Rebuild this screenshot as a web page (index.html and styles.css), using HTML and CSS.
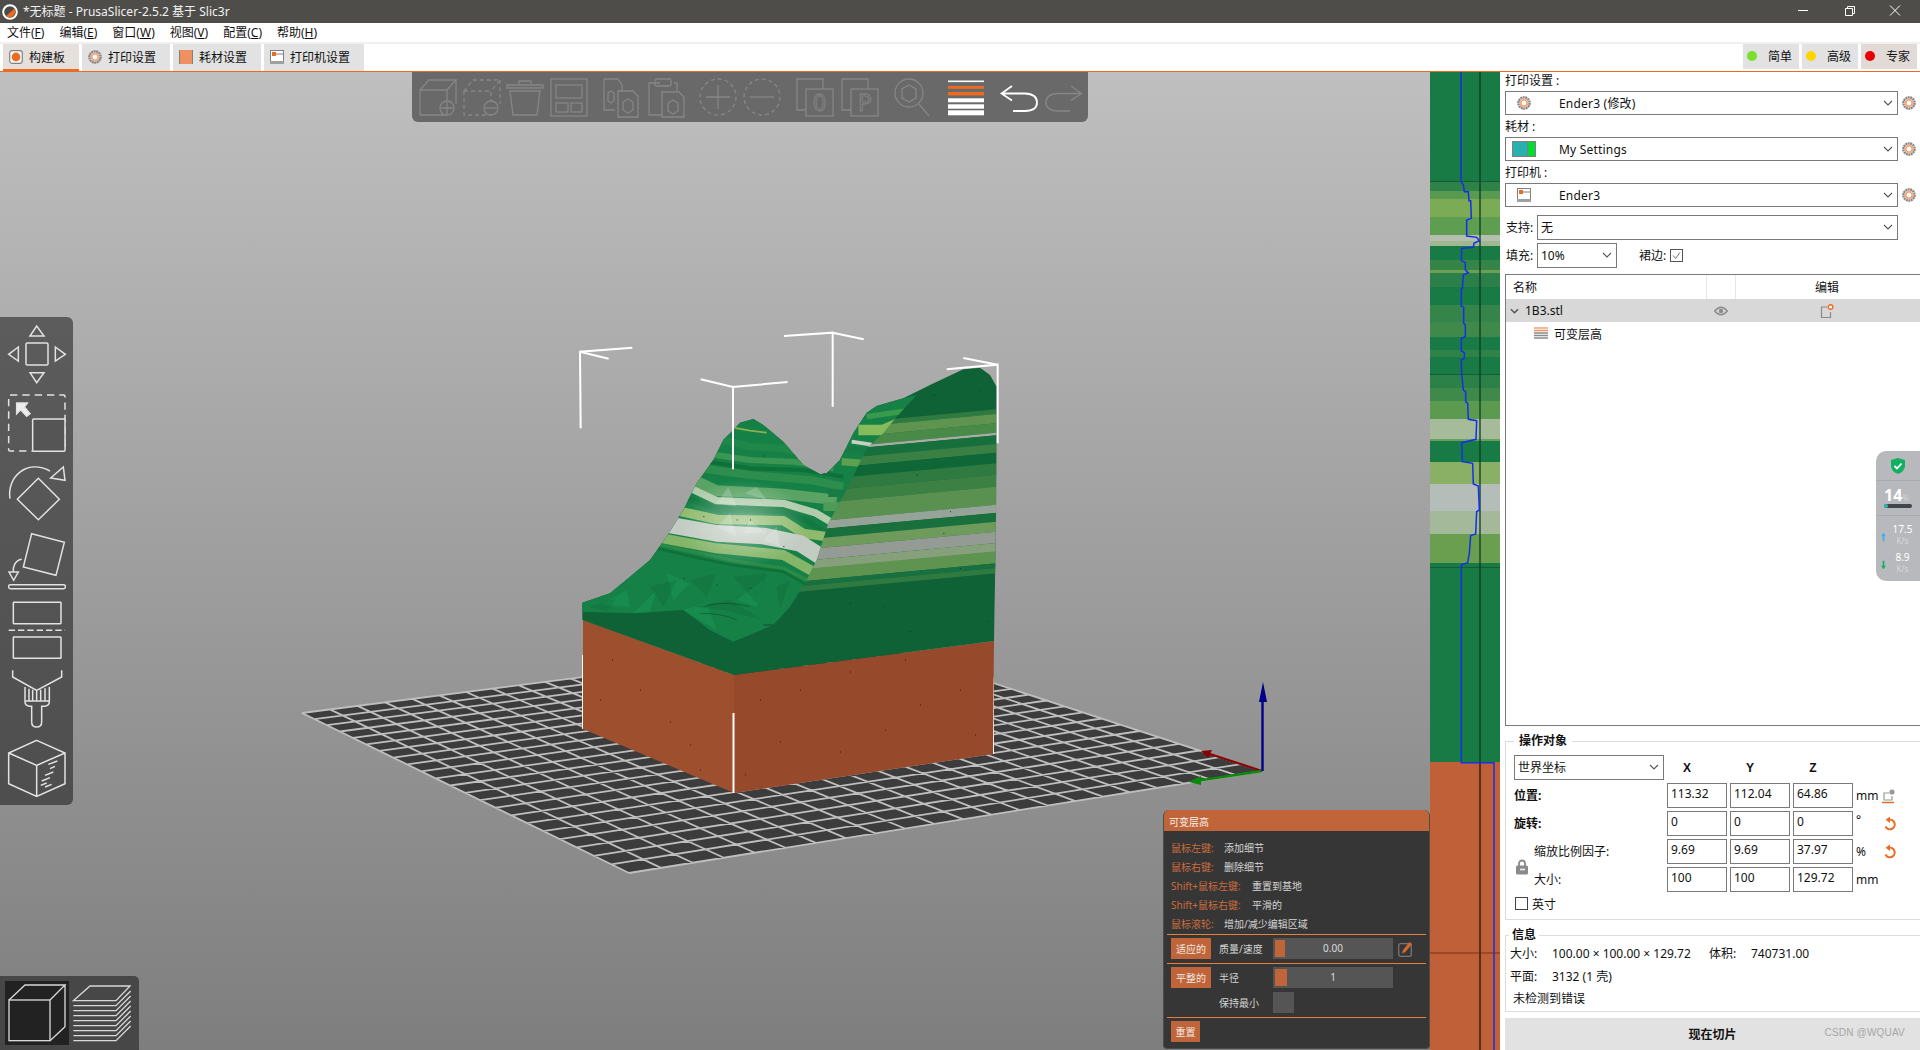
FILE: index.html
```html
<!DOCTYPE html>
<html lang="zh">
<head>
<meta charset="utf-8">
<title>PrusaSlicer</title>
<link rel="stylesheet" href="styles.css">
<script src="scene.js" defer></script>
</head>
<body>
<svg class="defs" width="0" height="0" aria-hidden="true">
  <defs>
    <symbol id="gear" viewBox="0 0 14 14">
      <circle cx="7" cy="7" r="5.6" fill="none" stroke="#858585" stroke-width="2.4" stroke-dasharray="1.9 .55"/>
      <circle cx="7" cy="7" r="4" fill="#fff" stroke="#f0a070" stroke-width="1.1"/>
      <circle cx="7" cy="7" r="3" fill="#fff" stroke="#ed6b21" stroke-width=".7"/>
    </symbol>
    <symbol id="chev" viewBox="0 0 10 6">
      <path d="M1 1l4 4 4-4" fill="none" stroke="#555" stroke-width="1.1"/>
    </symbol>
    <symbol id="printer" viewBox="0 0 14 14">
      <rect x=".5" y=".5" width="13" height="13" fill="#fff" stroke="#808080"/>
      <rect x="0" y="11" width="14" height="3" fill="#a0a0a0"/>
      <rect x="2" y="2" width="4" height="4" fill="#ed6b21"/>
      <path d="M6 4h8" stroke="#808080"/>
    </symbol>
    <symbol id="reset" viewBox="0 0 14 16">
      <path d="M3.5 10.5a4.8 4.8 0 1 0 3-6.6" fill="none" stroke="#ed6b21" stroke-width="2"/>
      <path d="M8 .6v6.4L3.6 3.8z" fill="#ed6b21"/>
    </symbol>
  </defs>
</svg>

<div class="app">
  <header class="titlebar">
    <svg class="app-logo" viewBox="0 0 16 16">
      <circle cx="8" cy="8" r="7.8" fill="#fff"/>
      <circle cx="8" cy="8" r="5.8" fill="#4a4a4a"/>
      <path d="M12.6 4.6A5.8 5.8 0 0 1 4 12z" fill="#ed6b21"/>
    </svg>
    <span class="title-text">*无标题 - PrusaSlicer-2.5.2 基于 Slic3r</span>
    <div class="winctl">
      <svg viewBox="0 0 46 23"><path d="M18 10.5h10" stroke="#fff"/></svg>
      <svg viewBox="0 0 46 23"><path d="M19.5 8.5h7v7h-7zM21.5 8.5v-2h7v7h-2" fill="none" stroke="#fff"/></svg>
      <svg viewBox="0 0 46 23"><path d="M18 5.5l10 10M28 5.5l-10 10" stroke="#fff"/></svg>
    </div>
  </header>

  <nav class="menubar">
    <span>文件(<u>F</u>)</span><span>编辑(<u>E</u>)</span><span>窗口(<u>W</u>)</span><span>视图(<u>V</u>)</span><span>配置(<u>C</u>)</span><span>帮助(<u>H</u>)</span>
  </nav>

  <div class="tabbar">
    <div class="tab tab-active tab-w76">
      <svg class="tab-icon" viewBox="0 0 14 14"><rect x=".7" y=".7" width="12.6" height="12.6" rx="2.5" fill="#fff" stroke="#808080" stroke-width="1.2"/><circle cx="7" cy="7" r="4.4" fill="#ed6b21"/></svg>
      <span>构建板</span>
    </div>
    <div class="tab tab-w88">
      <svg class="tab-icon"><use href="#gear"/></svg>
      <span>打印设置</span>
    </div>
    <div class="tab tab-w88">
      <svg class="tab-icon" viewBox="0 0 14 14"><rect x="0" y="0" width="14" height="14" fill="#f09060"/><path d="M.5 0v14M13.5 0v14" stroke="#808080"/></svg>
      <span>耗材设置</span>
    </div>
    <div class="tab tab-w100">
      <svg class="tab-icon"><use href="#printer"/></svg>
      <span>打印机设置</span>
    </div>
    <div class="tab-spacer"></div>
    <div class="mode"><i class="dot dot-green"></i><span>简单</span></div>
    <div class="mode"><i class="dot dot-yellow"></i><span>高级</span></div>
    <div class="mode mode-active"><i class="dot dot-red"></i><span>专家</span></div>
  </div>

  <main class="workspace">
    <section class="canvas">
      <svg class="scene" viewBox="0 72 1430 978" width="1430" height="978">
        <defs>
          <clipPath id="sil"><path d="M97 848L180 820 240 770 300 720 350 650 400 570 440 490 490 420 520 360 550 330 570 308 610 297 640 315 700 365 760 435 810 463 830 460 870 420 910 340 950 278 980 258 1060 235 1140 195 1240 148 1290 143 1320 165 1340 200 1338 600 1332 963 552 1065 97 900Z"/></clipPath>
          <clipPath id="terr"><path d="M97 848L180 820 240 770 300 720 350 650 400 570 440 490 490 420 520 360 550 330 570 308 610 297 640 315 700 365 760 435 810 463 830 460 870 420 910 340 950 278 980 258 1060 235 1100 225 1040 290 1000 340 950 385 900 490 835 610 800 720 765 790 720 860 670 915 550 965 480 930 400 870 250 880 97 875Z"/></clipPath>
          <radialGradient id="glow"><stop offset="0" stop-color="#fff" stop-opacity=".45"/><stop offset="1" stop-color="#fff" stop-opacity="0"/></radialGradient>
        </defs>

        <g id="bed"></g>

        <g class="bbox">
          <path d="M583 655V729M993 677V754"/>
        </g>

        <path d="M583 620L734 675V793L583 729Z" fill="#9e4f2e"/>
        <path d="M734 675L994 641 993 754 734 793Z" fill="#974a2b"/>
        <g class="specks">
          <path d="M612 660h1M640 690h1M600 700h1M670 722h1M690 745h1M650 760h1M760 700h1M800 690h1M850 672h1M905 660h1M960 690h1M885 730h1M780 742h1M840 752h1M920 705h1M975 735h1M700 770h1M745 775h1"/>
        </g>

        <g transform="translate(550 320) scale(.33333)">
          <path d="M97 848L180 820 240 770 300 720 350 650 400 570 440 490 490 420 520 360 550 330 570 308 610 297 640 315 700 365 760 435 810 463 830 460 870 420 910 340 950 278 980 258 1060 235 1140 195 1240 148 1290 143 1320 165 1340 200 1338 600 1332 963 552 1065 97 900Z" fill="#0f6136"/>
          <g clip-path="url(#sil)" fill="none">
            <g class="face-bands">
              <path d="M500 353L1340 275" stroke="#2f7a40" stroke-width="14"/>
              <path d="M500 374L1340 296" stroke="#5e9450" stroke-width="28"/>
              <path d="M500 402L1340 324" stroke="#4a8a48" stroke-width="28"/>
              <path d="M500 420L1340 342" stroke="#a8aca6" stroke-width="8"/>
              <path d="M500 437L1340 359" stroke="#17703c" stroke-width="26"/>
              <path d="M500 463L1340 385" stroke="#3a8044" stroke-width="26"/>
              <path d="M500 492L1340 414" stroke="#0f6636" stroke-width="32"/>
              <path d="M500 525L1340 447" stroke="#2f7a40" stroke-width="34"/>
              <path d="M500 560L1340 482" stroke="#3c8044" stroke-width="36"/>
              <path d="M500 605L1340 527" stroke="#5b9150" stroke-width="54"/>
              <path d="M500 644L1340 566" stroke="#96a398" stroke-width="24"/>
              <path d="M500 670L1340 592" stroke="#1a703c" stroke-width="26"/>
              <path d="M500 698L1340 620" stroke="#6e9a5c" stroke-width="30"/>
              <path d="M500 730L1340 652" stroke="#949b94" stroke-width="34"/>
              <path d="M500 760L1340 682" stroke="#86a07c" stroke-width="26"/>
              <path d="M500 790L1340 712" stroke="#5f9450" stroke-width="36"/>
              <path d="M500 815L1340 737" stroke="#187040" stroke-width="14"/>
              <path d="M500 830L1340 752" stroke="#2f7a40" stroke-width="16"/>
            </g>
          </g>
          <path d="M97 848L180 820 240 770 300 720 350 650 400 570 440 490 490 420 520 360 550 330 570 308 610 297 640 315 700 365 760 435 810 463 830 460 870 420 910 340 950 278 980 258 1060 235 1100 225 1040 290 1000 340 950 385 900 490 835 610 800 720 765 790 720 860 670 915 550 965 480 930 400 870 250 880 97 875Z" fill="#168147"/>
          <g clip-path="url(#terr)" fill="none" stroke-linejoin="round">
            <path d="M500 355L600 380 700 385 830 420" stroke="#1f8748" stroke-width="22"/>
            <path d="M545 322L600 332 650 338" stroke="#8fb050" stroke-width="5"/>
            <path d="M460 400L600 420 730 425 850 445" stroke="#3a9652" stroke-width="18"/>
            <path d="M440 420L600 445 760 450 880 470" stroke="#0f7038" stroke-width="12"/>
            <path d="M420 440L600 465 780 480 880 500" stroke="#2d8d4c" stroke-width="24"/>
            <path d="M400 465L500 512 700 522 860 540" stroke="#5aa364" stroke-width="32"/>
            <path d="M390 490L500 542 700 550 795 578 850 610" stroke="#b0ccaa" stroke-width="22"/>
            <path d="M375 520L500 568 700 572 775 605 830 640" stroke="#127a40" stroke-width="18"/>
            <path d="M350 565L500 598 700 602 760 640 830 650" stroke="#8fba6c" stroke-width="28"/>
            <path d="M320 608L500 640 640 648 750 670 820 715" stroke="#c2ccc2" stroke-width="50"/>
            <path d="M310 650L500 685 700 705 790 755" stroke="#85b569" stroke-width="30"/>
            <path d="M310 670L450 700 550 722 700 745 790 790" stroke="#2a8a48" stroke-width="10"/>
            <path d="M300 680L450 715 550 735 700 755 780 800" stroke="#0f7038" stroke-width="8"/>
            <path d="M925 330L1000 330 1070 300" stroke="#86bb5c" stroke-width="32"/>
            <path d="M950 290L1090 270" stroke="#3a9a4c" stroke-width="16"/>
            <path d="M905 365L965 374" stroke="#c8d0c0" stroke-width="11"/>
            <path d="M890 388L950 392" stroke="#187a45" stroke-width="18"/>
            <path d="M875 425L940 430" stroke="#5fa050" stroke-width="22"/>
            <path d="M835 520L910 520" stroke="#187a45" stroke-width="22"/>
            <path d="M820 560L890 560" stroke="#4f9a55" stroke-width="26"/>
          </g>
          <g clip-path="url(#terr)" class="facets">
            <ellipse cx="580" cy="610" rx="190" ry="130" fill="url(#glow)"/>
            <path d="M500 550L535 500 560 560ZM585 520L620 500 650 540ZM500 620L540 580 560 650ZM640 660L680 620 690 680ZM600 600L650 640 580 640Z" fill="#fff" opacity=".18"/>
            <path d="M250 880L320 810 290 900ZM400 870L470 850 500 930ZM560 840L640 780 620 860ZM150 855L230 810 240 860ZM350 760L420 790 370 840Z" fill="#1c9556" opacity=".55"/>
            <path d="M120 860L200 835 170 875ZM300 800L380 780 340 860ZM420 780L500 760 470 830ZM550 770L650 760 620 850ZM430 860L540 840 640 900 520 870ZM680 800L720 780 690 870Z" fill="#0b5a30" opacity=".22"/>
            <path d="M460 860Q520 840 600 860" stroke="#07361d" stroke-width="2" fill="none" opacity=".6"/>
            <path d="M450 880Q520 880 560 900" stroke="#07361d" stroke-width="2" fill="none" opacity=".6"/>
            <path d="M640 915h30" stroke="#07361d" stroke-width="3" fill="none" opacity=".7"/>
          </g>
          <path class="terrain-specks" d="M400 775h3M500 795h3M600 805h3M640 408h3M600 600h3M560 600h3M460 590h3M700 680h3M1100 465h3M1200 575h3M1230 745h3M1180 640h3M1290 210h3M1150 225h3M900 850h3M1080 935h3M1310 905h3M1000 860h3"/>
          <g class="bbox-big">
            <path d="M92 325L90 95 247 83M90 95L176 116"/>
            <path d="M549 448V201L713 186M549 201L452 178"/>
            <path d="M848 260V38L702 48M848 38L941 58"/>
            <path d="M1343 370V134L1190 148M1343 134L1240 114"/>
          </g>
        </g>

        <g class="bbox"><path d="M733.5 713V793"/></g>

        <path d="M1262 771L1207 753" stroke="#8b0000" stroke-width="2.2"/>
        <path d="M1201 751L1212 750 1208 758Z" fill="#8b0000"/>
        <path d="M1262 771L1196 781" stroke="#0a8a0a" stroke-width="2.4"/>
        <path d="M1189 782L1201 776 1201 785Z" fill="#0a8a0a"/>
        <path d="M1262.5 771V698" stroke="#00008b" stroke-width="2.4"/>
        <path d="M1263 682L1267 702H1259Z" fill="#00008b"/>
      </svg>

      <div class="top-toolbar">
        <svg class="tb" viewBox="0 0 40 40"><path d="M3 13h27v25H3zM3 13l9-10h27L30 13M39 3v24"/><circle cx="30" cy="31" r="7" class="tb-fill"/><path d="M30 25v12M24 31h12"/></svg>
        <svg class="tb" viewBox="0 0 40 40"><path class="dash" d="M3 14h27v24H3zM3 14l9-11h27L30 14M39 3v24"/><circle cx="30" cy="31" r="7" class="tb-fill"/><path d="M24 31h12"/></svg>
        <svg class="tb" viewBox="0 0 40 40"><path d="M2 8h36v3H2zM14 8V4h12v4M5 14l3 24h24l3-24z"/></svg>
        <svg class="tb" viewBox="0 0 40 40"><rect x="2" y="2" width="36" height="37"/><rect x="7" y="8" width="26" height="13"/><rect x="7" y="26" width="12" height="9"/><rect x="22" y="26" width="11" height="9"/></svg>
        <svg class="tb gap-8" viewBox="0 0 40 40"><path d="M3 2h14l4 6v6M14 33H3V2"/><path d="M8 14l3-2 3 2v8l-3 2-3-2z" transform="translate(-1 2)"/><path d="M17 14h15l5 5v21H17z"/><path d="M27 22l5 3v8l-5 3-5-3v-8z"/></svg>
        <svg class="tb gap-1" viewBox="0 0 40 40"><path d="M14 6H3v32h13M28 6h3v8"/><rect x="9" y="2" width="16" height="7" rx="2"/><path d="M16 15h17l5 5v20H16z"/><path d="M27 23l5 3v8l-5 3-5-3v-8z"/></svg>
        <svg class="tb gap-8" viewBox="0 0 40 40"><ellipse class="dash" cx="20" cy="20" rx="18" ry="18"/><path d="M20 8v24M8 20h24"/></svg>
        <svg class="tb" viewBox="0 0 40 40"><ellipse class="dash" cx="20" cy="20" rx="18" ry="18"/><path d="M8 20h24"/></svg>
        <svg class="tb gap-9" viewBox="0 0 40 40"><path d="M11 33H2V2h26v10"/><rect x="11" y="12" width="27" height="27"/><text x="18" y="34" class="tb-letter">0</text></svg>
        <svg class="tb gap-1" viewBox="0 0 40 40"><path d="M11 33H2V2h26v10"/><rect x="11" y="12" width="27" height="27"/><text x="18" y="34" class="tb-letter">P</text></svg>
        <svg class="tb gap-8" viewBox="0 0 40 40"><circle cx="17" cy="16" r="14"/><path d="M17 8l7 4v9l-7 4-7-4v-9zM27 27l10 12"/></svg>
        <svg class="tb gap-10" viewBox="0 0 40 40">
          <rect x="2" y="3.500" width="36" height="1.600" fill="#fff" stroke="none"/>
          <rect x="2" y="9" width="36" height="2.800" fill="#ed6b21" stroke="none"/>
          <rect x="2" y="15" width="36" height="3.400" fill="#ed6b21" stroke="none"/>
          <rect x="2" y="21.300" width="36" height="4" fill="#fff" stroke="none"/>
          <rect x="2" y="27.300" width="36" height="4.400" fill="#fff" stroke="none"/>
          <rect x="2" y="33.300" width="36" height="5" fill="#fff" stroke="none"/>
        </svg>
        <svg class="tb gap-9 tb-on" viewBox="0 0 40 40"><path d="M2.500 16.500H26Q38 17 38 25.500 38 34 26 34H14M13 9L2.500 16.500 13 23.500"/></svg>
        <svg class="tb gap-1" viewBox="0 0 40 40"><path d="M37.500 16.500H14Q2 17 2 25.500 2 34 14 34H26M27 9L37.500 16.500 27 23.500"/></svg>
      </div>

      <div class="left-toolbar">
        <svg viewBox="0 20 219 1464" width="73" height="488">
          <g class="lt">
            <path d="M90 77L110 47 132 77ZM55 110L26 132 55 152ZM166 110L196 132 166 152ZM90 187L110 217 132 187Z"/>
            <rect x="78" y="98" width="66" height="66" rx="4"/>
            <rect x="26" y="254" width="169" height="168" rx="4" stroke-dasharray="22 15"/>
            <rect x="98" y="326" width="97" height="97" rx="3" fill="#555"/>
            <path d="M50 278H82L73 290 90 310 80 318 62 298 50 310Z" fill="#eee"/>
            <path d="M30 565C20 500 80 445 150 482M152 503L190 470 195 510Z"/>
            <path d="M115 504L178 567 115 628 52 567Z"/>
            <path d="M95 670L193 696 168 795 70 770Z"/>
            <path d="M65 747C45 750 38 770 40 785M27 785H55L41 810Z"/>
            <rect x="26" y="823" width="170" height="12" rx="5"/>
            <rect x="40" y="876" width="143" height="64" rx="2"/>
            <path d="M26 960H195" stroke-dasharray="19 9"/>
            <rect x="40" y="980" width="143" height="64" rx="2"/>
            <path d="M38 1080V1100L110 1140 185 1100V1080"/>
            <path d="M75 1130V1175Q75 1185 88 1188H95V1235Q95 1250 110 1250 125 1250 125 1235V1188H135Q148 1185 148 1175V1130M75 1172H148M87 1135V1170M98 1138V1170M110 1142V1170M122 1138V1170M135 1134V1170"/>
            <path d="M110 1290L195 1328V1420L110 1458 26 1420V1328ZM26 1328L110 1365 195 1328M110 1365V1458"/>
            <path d="M145 1362L172 1352M150 1375L165 1368M135 1395L160 1385M125 1412L150 1402M122 1425L140 1418M135 1430L155 1422"/>
          </g>
        </svg>
      </div>

      <div class="view-toolbar">
        <svg class="view-btn view-btn-on" viewBox="15 63 192 192">
          <g class="vt"><rect x="27" y="120" width="123" height="122"/><path d="M27 120L75 75H195L150 120M195 75V200L150 242"/></g>
        </svg>
        <svg class="view-btn" viewBox="210 63 192 192">
          <g class="vt">
            <path d="M220 122L270 78H390L348 122Z"/>
            <path d="M220 137H348L392 93M220 152H348L392 108M220 167H348L392 123M220 182H348L392 138M220 197H348L392 153M220 212H348L392 168M220 227H348L392 183M220 242H348L392 198"/>
          </g>
        </svg>
      </div>

      <div class="layer-panel">
        <div class="lp-title">可变层高</div>
        <div class="lp-help">
          <div><span class="lp-key lp-k1">鼠标左键:</span><span>添加细节</span></div>
          <div><span class="lp-key lp-k1">鼠标右键:</span><span>删除细节</span></div>
          <div><span class="lp-key lp-k2">Shift+鼠标左键:</span><span>重置到基地</span></div>
          <div><span class="lp-key lp-k2">Shift+鼠标右键:</span><span>平滑的</span></div>
          <div><span class="lp-key lp-k1">鼠标滚轮:</span><span>增加/减少编辑区域</span></div>
        </div>
        <div class="lp-sec">
          <div class="lp-row">
            <button class="lp-btn">适应的</button>
            <span class="lp-lab">质量/速度</span>
            <div class="lp-slider"><i class="lp-thumb"></i>0.00</div>
            <svg class="lp-edit" viewBox="0 0 16 16"><rect x=".7" y="2.700" width="12.600" height="12.600" rx="2" fill="none" stroke="#777" stroke-width="1.300"/><path d="M4 12.500l1-3.500 6.500-8 2.500 2-6.500 8z" fill="#d06a30"/></svg>
          </div>
        </div>
        <div class="lp-sec lp-sec2">
          <div class="lp-row">
            <button class="lp-btn">平整的</button>
            <span class="lp-lab">半径</span>
            <div class="lp-slider"><i class="lp-thumb lp-thumb2"></i>1</div>
          </div>
          <div class="lp-row">
            <span class="lp-btn-space"></span>
            <span class="lp-lab">保持最小</span>
            <div class="lp-check"></div>
          </div>
        </div>
        <div class="lp-sec">
          <div class="lp-row"><button class="lp-btn lp-btn-s">重置</button></div>
        </div>
      </div>
    </section>

    <section class="strip">
      <svg viewBox="1430 72 70 978" width="70" height="978">
        <rect x="1430" y="72" width="70" height="690" fill="#187a45"/>
        <g class="bands">
          <rect x="1430" y="181" width="70" height="10" fill="#2f8248"/>
          <rect x="1430" y="191" width="70" height="8" fill="#5a9a50"/>
          <rect x="1430" y="199" width="70" height="18" fill="#7cab55"/>
          <rect x="1430" y="217" width="70" height="18" fill="#5f9d50"/>
          <rect x="1430" y="235" width="70" height="6" fill="#b5bfb0"/>
          <rect x="1430" y="241" width="70" height="5" fill="#a0b890"/>
          <rect x="1430" y="260" width="70" height="10" fill="#358549"/>
          <rect x="1430" y="270" width="70" height="3" fill="#6f9f55"/>
          <rect x="1430" y="273" width="70" height="14" fill="#2a8048"/>
          <rect x="1430" y="305" width="70" height="17" fill="#35844a"/>
          <rect x="1430" y="322" width="70" height="15" fill="#3f8a4a"/>
          <rect x="1430" y="350" width="70" height="7" fill="#2f8248"/>
          <rect x="1430" y="374" width="70" height="14" fill="#2c8148"/>
          <rect x="1430" y="388" width="70" height="13" fill="#3f8a4a"/>
          <rect x="1430" y="401" width="70" height="18" fill="#5c9a50"/>
          <rect x="1430" y="419" width="70" height="20" fill="#a5bb9a"/>
          <rect x="1430" y="439" width="70" height="2" fill="#6a9f60"/>
          <rect x="1430" y="462" width="70" height="22" fill="#8ab066"/>
          <rect x="1430" y="484" width="70" height="27" fill="#b5bdb8"/>
          <rect x="1430" y="511" width="70" height="23" fill="#a3b99a"/>
          <rect x="1430" y="534" width="70" height="29" fill="#6b9f50"/>
          <rect x="1430" y="181" width="70" height="1" fill="#145c38"/>
          <rect x="1430" y="374" width="70" height="1" fill="#145c38"/>
          <rect x="1430" y="567" width="70" height="1" fill="#145c38"/>
        </g>
        <rect x="1430" y="762" width="70" height="288" fill="#c06038"/>
        <path d="M1430 953H1500" stroke="#7a2e12" stroke-width="1"/>
        <path d="M1480 72V1050" stroke="#0b3a20" stroke-width="1.500" opacity=".85"/>
        <path d="M1480 762V1050" stroke="#5a2a15" stroke-width="1.500"/>
        <g transform="translate(1420 70) scale(.33333)">
          <path class="profile" d="M123 0V335L130 345 133 365H145L147 392H152L154 445 140 450V498L170 502 178 512 162 520 160 532 125 535 124 572 136 578V600L145 608 130 615 127 655 124 657V708L131 712V760L136 765V800L124 805V843L133 848V865L124 870 125 912 130 960 137 965V995L143 1000 145 1048 170 1052 168 1108 125 1118 127 1175 158 1180 160 1242 175 1248 178 1320 170 1325 167 1392 152 1397 148 1450 143 1478 124 1485V2078H222V2940"/>
        </g>
      </svg>
    </section>

    <aside class="sidebar">
      <div class="plabel">打印设置 :</div>
      <div class="preset">
        <div class="combo">
          <svg class="combo-icon"><use href="#gear"/></svg>
          <span class="combo-text">Ender3 (修改)</span>
          <svg class="chev"><use href="#chev"/></svg>
        </div>
        <svg class="gear"><use href="#gear"/></svg>
      </div>
      <div class="plabel plabel-n">耗材 :</div>
      <div class="preset">
        <div class="combo">
          <svg class="combo-fil" viewBox="0 0 24 16"><rect x=".5" y=".5" width="23" height="15" fill="#27b0b0" stroke="#808080"/><rect x="16.500" y="1" width="6" height="14" fill="#00e020"/><path d="M15.500 0v16" stroke="#808080"/></svg>
          <span class="combo-text">My Settings</span>
          <svg class="chev"><use href="#chev"/></svg>
        </div>
        <svg class="gear"><use href="#gear"/></svg>
      </div>
      <div class="plabel plabel-n">打印机 :</div>
      <div class="preset">
        <div class="combo">
          <svg class="combo-icon"><use href="#printer"/></svg>
          <span class="combo-text">Ender3</span>
          <svg class="chev"><use href="#chev"/></svg>
        </div>
        <svg class="gear"><use href="#gear"/></svg>
      </div>

      <div class="opt-row opt-first">
        <span class="opt-label">支持:</span>
        <div class="combo combo-plain combo-wide"><span>无</span><svg class="chev"><use href="#chev"/></svg></div>
      </div>
      <div class="opt-row">
        <span class="opt-label">填充:</span>
        <div class="combo combo-plain combo-small"><span>10%</span><svg class="chev chev-s"><use href="#chev"/></svg></div>
        <span class="opt-label opt-brim">裙边:</span>
        <span class="check check-on"><svg viewBox="0 0 13 13"><path d="M2.500 6.500l3 3.500 5-7" fill="none" stroke="#555" stroke-width="1"/></svg></span>
      </div>

      <div class="objlist">
        <div class="ol-head">
          <span class="ol-name">名称</span>
          <span class="ol-eye"></span>
          <span class="ol-edit">编辑</span>
        </div>
        <div class="ol-row ol-selected">
          <span class="ol-name ol-file">
            <svg class="ol-chev" viewBox="0 0 10 6"><path d="M1 1l4 4 4-4" fill="none" stroke="#555" stroke-width="1.600"/></svg>
            1B3.stl
          </span>
          <span class="ol-eye">
            <svg class="eye" viewBox="0 0 14 10"><path d="M.7 5Q7-2.500 13.300 5 7 12.500 .7 5Z" fill="none" stroke="#8a8a8a" stroke-width="1.300"/><circle cx="7" cy="5" r="2.200" fill="#8a8a8a"/></svg>
          </span>
          <span class="ol-edit">
            <svg class="ol-editic" viewBox="0 0 14 14"><path d="M7 3H1.500v10.500h9V8" fill="none" stroke="#8a8a8a" stroke-width="1.200"/><circle cx="10.500" cy="3" r="2.300" fill="#fff" stroke="#ed6b21" stroke-width="1.400"/></svg>
          </span>
        </div>
        <div class="ol-child">
          <svg class="ol-layers" viewBox="0 0 14 13"><path d="M0 1h14" stroke="#f0a070" stroke-width="1.500"/><path d="M0 3.500h14" stroke="#f09060" stroke-width="1.500"/><path d="M0 6h14M0 8.500h14M0 11h14" stroke="#8a8a8a" stroke-width="1.700"/></svg>
          <span>可变层高</span>
        </div>
      </div>

      <div class="box box-manip">
        <span class="legend legend-a">操作对象</span>
        <div class="mgrid">
          <div class="combo combo-plain combo-coord"><span>世界坐标</span><svg class="chev chev-s"><use href="#chev"/></svg></div>
          <b class="axis">X</b><b class="axis">Y</b><b class="axis">Z</b><span></span><span></span>

          <span class="mlabel mlabel-b">位置:</span>
          <span class="inp">113.32</span><span class="inp">112.04</span><span class="inp">64.86</span>
          <span class="unit">mm</span>
          <svg class="mic" viewBox="0 0 14 16"><path d="M7 5H2v7h8V8" fill="none" stroke="#9a9a9a" stroke-width="1.200"/><circle cx="10" cy="4" r="2.600" fill="#9a9a9a"/><path d="M0 14.500h12" stroke="#ed6b21" stroke-width="1.500"/></svg>

          <span class="mlabel mlabel-b">旋转:</span>
          <span class="inp">0</span><span class="inp">0</span><span class="inp">0</span>
          <span class="unit unit-deg">°</span>
          <svg class="mic"><use href="#reset"/></svg>

          <span class="mlabel mlabel-i mrow-scale">缩放比例因子:</span>
          <span class="inp">9.69</span><span class="inp">9.69</span><span class="inp">37.97</span>
          <span class="unit">%</span>
          <svg class="mic"><use href="#reset"/></svg>

          <span class="mlabel mlabel-i mrow-size">大小:</span>
          <span class="inp">100</span><span class="inp">100</span><span class="inp">129.72</span>
          <span class="unit">mm</span>
          <span></span>

          <svg class="lock" viewBox="0 0 12 16"><path d="M3 7V4.500a3 3 0 0 1 6 0V7" fill="none" stroke="#8a8a8a" stroke-width="1.800"/><rect x="0" y="6.500" width="12" height="9" rx="1.500" fill="#8a8a8a"/><path d="M4 10.500h5" stroke="#eee" stroke-width="1.600"/></svg>
        </div>
        <div class="inch"><span class="check"></span><span>英寸</span></div>
      </div>

      <div class="box box-info">
        <span class="legend legend-b">信息</span>
        <div class="irow"><span class="ilab">大小:</span><span class="ival">100.00 × 100.00 × 129.72</span><span class="ilab">体积:</span><span>740731.00</span></div>
        <div class="irow"><span class="ilab">平面:</span><span>3132 (1 壳)</span></div>
        <div class="irow irow-msg">未检测到错误</div>
      </div>

      <div class="slice">
        <b>现在切片</b>
        <span class="watermark">CSDN @WQUAV</span>
      </div>

      <div class="netwidget">
        <div class="nw-top">
          <svg class="nw-shield" viewBox="0 0 14 16"><path d="M7 0l7 2v6q0 5-7 8-7-3-7-8V2z" fill="#12b060"/><path d="M3.500 8l2.500 2.500 4.500-5" fill="none" stroke="#fff" stroke-width="1.800"/></svg>
        </div>
        <div class="nw-mid">
          <div class="nw-pct"><b>14</b><small>%</small></div>
          <div class="nw-bar"><i></i></div>
        </div>
        <div class="nw-speed">
          <svg class="nw-arrow" viewBox="0 0 6 10"><path d="M3 0l3 4H4v6H2V4H0z" fill="#3ab0f0"/></svg>
          <div class="nw-val"><span>17.5</span><small>K/s</small></div>
        </div>
        <div class="nw-speed">
          <svg class="nw-arrow" viewBox="0 0 6 10"><path d="M3 10l3-4H4V0H2v6H0z" fill="#12b060"/></svg>
          <div class="nw-val"><span>8.9</span><small>K/s</small></div>
        </div>
      </div>
    </aside>
  </main>
</div>
</body>
</html>
```
FILE: styles.css
```css
* { box-sizing: border-box; }
html, body { margin: 0; height: 100%; }
body {
  font-family: "Noto Sans", "Noto Sans CJK SC", sans-serif;
  font-size: 12px;
  color: #111;
  background: #fff;
  overflow: hidden;
}
.defs { position: absolute; }
.app { display: flex; flex-direction: column; width: 1920px; height: 1050px; }

/* title bar */
.titlebar { height: 23px; background: #4e4d4a; color: #fff; display: flex; align-items: center; padding-left: 2px; flex: none; }
.app-logo { width: 16px; height: 16px; flex: none; }
.title-text { margin-left: 5px; font-size: 12px; line-height: 23px; color: #f2f2f2; }
.winctl { margin-left: auto; display: flex; margin-right: 2px; }
.winctl svg { width: 46px; height: 23px; }

/* menu */
.menubar { height: 19px; display: flex; gap: 15px; padding-left: 7px; align-items: center; flex: none; background: #fff; }
.menubar span { line-height: 18px; }

/* tabs */
.tabbar { height: 30px; border-top: 2px solid #f0f0f0; border-bottom: 1px solid #ed6b21; padding: 0 3px; display: flex; gap: 3px; flex: none; background: #fff; }
.tab { height: 27px; background: #e2e2e2; display: flex; align-items: center; gap: 6px; padding: 0 0 2px 6px; }
.tab-w76 { width: 76px; }
.tab-w88 { width: 88px; }
.tab-w100 { width: 100px; }
.tab-active { background: #e6e0dc; border-bottom: 2px solid #ed6b21; padding-bottom: 0; }
.tab-icon { width: 14px; height: 14px; flex: none; }
.tab-spacer { flex: 1; }
.mode { width: 56px; height: 25px; background: #e2e2e2; display: flex; align-items: center; padding: 0 0 1px 4px; gap: 11px; }
.mode-active { background: #e2dad7; }
.dot { width: 10px; height: 10px; border-radius: 50%; flex: none; }
.dot-green { background: #7adf2a; }
.dot-yellow { background: #ffd500; }
.dot-red { background: #e80000; }

/* layout */
.workspace { flex: 1; display: grid; grid-template-columns: 1430px 70px 420px; min-height: 0; }

/* 3D canvas */
.canvas { position: relative; overflow: hidden; background: linear-gradient(#bfbfbf, #7e7e7e); }
.scene { position: absolute; left: 0; top: 0; display: block; }
.bbox path { fill: none; stroke: #fff; stroke-width: 2; }
.bbox-big path { fill: none; stroke: #fff; stroke-width: 6; }
.specks path { stroke: #3a1a0c; stroke-width: 1; fill: none; }
.terrain-specks { stroke: #0b3a20; stroke-width: 3; fill: none; }

.top-toolbar { position: absolute; left: 412px; top: 0; width: 676px; height: 50px; background: #696969; border-radius: 0 0 6px 6px; display: flex; gap: 4px; padding: 5px 0 0 5px; }
.tb { width: 40px; height: 40px; flex: none; fill: none; stroke: #868686; stroke-width: 1.3; overflow: visible; }
.gap-1 { margin-left: 1px; }
.gap-8 { margin-left: 8px; }
.gap-9 { margin-left: 9px; }
.gap-10 { margin-left: 10px; }
.tb-fill { fill: #696969; }
.dash { stroke-dasharray: 4 3; }
.tb-on { stroke: #fff; stroke-width: 1.8; }
.tb-letter { font-size: 23px; font-family: "Noto Sans", sans-serif; fill: none; stroke: #868686; stroke-width: .9; }

.left-toolbar { position: absolute; left: 0; top: 245px; width: 73px; height: 488px; background: linear-gradient(#5c5c5c, #4e4e4e); border-radius: 0 6px 6px 0; }
.left-toolbar svg { display: block; }
.lt { fill: none; stroke: #e2e2e2; stroke-width: 4.500; }

.view-toolbar { position: absolute; left: 0; bottom: 0; width: 139px; height: 74px; background: #474747; border-radius: 0 5px 0 0; display: flex; padding: 5px 0 0 5px; gap: 1px; }
.view-btn { width: 64px; height: 64px; display: block; }
.view-btn-on { background: #222; }
.vt { fill: none; stroke: #d8d8d8; stroke-width: 4; }

.layer-panel { position: absolute; left: 1163px; top: 738px; width: 267px; height: 239px; background: #363636; border-radius: 6px 6px 4px 4px; border: 1px solid #4c4c4c; border-top: 0; color: #d4d4d4; font-size: 10px; }
.lp-title { height: 21px; line-height: 24px; background: #c0653a; border-radius: 5px 5px 0 0; padding-left: 5px; color: #f6efe9; }
.lp-help { padding: 8px 0 0 7px; height: 103px; }
.lp-help div { height: 19px; line-height: 19px; white-space: nowrap; }
.lp-key { display: inline-block; color: #cb6c3c; }
.lp-k1 { width: 53px; }
.lp-k2 { width: 81px; }
.lp-sec { border-top: 1px solid #e2803f; margin: 0 3px; padding: 3px 0 0 4px; height: 29px; }
.lp-sec2 { height: 54px; }
.lp-row { display: flex; align-items: center; height: 21px; margin-bottom: 4px; }
.lp-btn { width: 40px; height: 21px; background: #c0653a; color: #f2e8e0; border: 0; padding: 0; font: inherit; flex: none; }
.lp-btn-s { width: 29px; }
.lp-btn-space { width: 40px; flex: none; }
.lp-lab { width: 54px; margin-left: 8px; flex: none; }
.lp-slider { position: relative; width: 120px; height: 21px; line-height: 21px; background: #555; text-align: center; color: #ddd; flex: none; }
.lp-thumb { position: absolute; left: 2px; top: 2px; width: 10px; height: 17px; background: #c0653a; }
.lp-thumb2 { width: 12px; }
.lp-check { width: 21px; height: 21px; background: #555; flex: none; }
.lp-edit { width: 16px; height: 16px; margin-left: 5px; flex: none; }

/* height strip */
.strip { background: #187a45; }
.strip svg { display: block; }
.profile { fill: none; stroke: #1430e8; stroke-width: 4.500; }

/* sidebar */
.sidebar { position: relative; padding-left: 5px; background: #fff; min-width: 0; }
.plabel { height: 19px; line-height: 18px; }
.plabel-n { height: 22px; line-height: 23px; }
.preset { display: flex; align-items: center; }
.combo { width: 393px; height: 24px; border: 1px solid #7a7a7a; display: flex; align-items: center; flex: none; background: #fff; }
.combo-icon { width: 14px; height: 14px; margin-left: 11px; flex: none; }
.combo-fil { width: 24px; height: 16px; margin-left: 6px; flex: none; }
.combo-fil + .combo-text { margin-left: 23px; }
.combo-text { margin-left: 28px; font-size: 12px; letter-spacing: .2px; }
.chev { width: 10px; height: 6px; margin-left: auto; margin-right: 4px; flex: none; }
.chev-s { margin-right: 4px; }
.gear { width: 14px; height: 14px; margin-left: 4px; flex: none; }
.opt-row { display: flex; align-items: center; height: 25px; margin-top: 3px; }
.opt-first { margin-top: 8px; }
.opt-label { width: 32px; flex: none; padding: 0 0 2px 1px; }
.combo-plain { padding: 0 0 1px 3px; height: 25px; }
.combo-wide { width: 361px; }
.combo-small { width: 80px; }
.opt-brim { margin-left: 21px; }
.check { display: inline-block; width: 13px; height: 13px; border: 1px solid #444; background: #fff; flex: none; }
.check-on { border-color: #555; }
.check svg { display: block; width: 11px; height: 11px; }

.objlist { margin-top: 6px; height: 452px; border: 1px solid #7a7a7a; border-width: 1px 0 1px 1px; width: 415px; }
.ol-head { display: flex; height: 24px; align-items: center; }
.ol-name { width: 200px; padding-left: 7px; flex: none; height: 100%; display: flex; align-items: center; }
.ol-eye { width: 30px; flex: none; height: 100%; display: flex; align-items: center; justify-content: center; }
.ol-edit { flex: 1; height: 100%; display: flex; align-items: center; justify-content: center; padding-right: 2px; }
.ol-head .ol-eye { border-left: 1px solid #e6e6e6; border-right: 1px solid #e6e6e6; }
.ol-row { display: flex; height: 23px; align-items: center; }
.ol-selected { background: #d8d8d8; }
.ol-file { padding-left: 4px; gap: 6px; }
.ol-chev { width: 9px; height: 6px; }
.eye { width: 14px; height: 10px; }
.ol-editic { width: 14px; height: 14px; }
.ol-child { display: flex; align-items: center; padding-left: 28px; gap: 6px; height: 23px; }
.ol-layers { width: 14px; height: 13px; }

.box { position: relative; margin-top: 15px; width: 415px; border: 1px solid #dcdcdc; border-right: 0; }
.legend { position: absolute; top: -9px; background: #fff; line-height: 16px; font-weight: 700; padding: 0 5px; }
.legend-a { left: 8px; }
.legend-b { left: 3px; padding: 0 3px; }
.box-manip { height: 179px; padding: 13px 0 0 8px; }
.mgrid { display: grid; grid-template-columns: 150px 60px 60px 60px 26px 20px; grid-auto-rows: 25px; gap: 3px; align-items: center; }
.combo-coord { width: 150px; }
.axis { text-align: center; font-size: 12px; font-family: "Liberation Sans", sans-serif; padding-right: 20px; }
.mlabel { white-space: nowrap; padding-bottom: 2px; }
.mlabel-b { font-weight: 700; }
.mlabel-i { padding-left: 20px; }
.mrow-scale { grid-column: 1; grid-row: 4; }
.mrow-size { grid-column: 1; grid-row: 5; }
.inp { height: 25px; border: 1px solid #7a7a7a; padding: 2px 0 0 3px; line-height: 16px; }
.unit-deg { line-height: 12px; align-self: start; padding-top: 3px; }
.mic { width: 14px; height: 16px; margin-left: -3px; }
.lock { grid-column: 1; grid-row: 4 / span 2; width: 12px; height: 16px; margin: 2px 0 0 2px; }
.inch { display: flex; align-items: center; gap: 4px; height: 13px; margin: 5px 0 0 1px; }

.box-info { height: 77px; padding: 6px 0 0 4px; }
.irow { display: flex; align-items: center; height: 22.500px; }
.ilab { width: 42px; flex: none; }
.ival { width: 157px; flex: none; }
.irow-msg { padding-left: 3px; }

.slice { position: relative; margin-top: 6px; width: 415px; height: 32px; background: #e2e2e2; display: flex; align-items: center; justify-content: center; }
.watermark { position: absolute; right: 15px; top: 9px; font-size: 10px; color: #a6a6a6; font-family: "Liberation Sans", sans-serif; letter-spacing: .2px; }

/* network widget overlaid on the sidebar */
.netwidget { position: absolute; left: 376px; top: 379px; width: 44px; height: 130px; background: #b8b9bc; border-radius: 10px 0 0 10px; color: #fff; }
.nw-top { height: 30px; border-bottom: 1px solid #a9aaad; display: flex; justify-content: center; align-items: center; }
.nw-shield { width: 14px; height: 16px; }
.nw-mid { height: 35px; margin-bottom: 4px; border-bottom: 1px solid #a9aaad; padding: 6px 0 0 8px; }
.nw-pct { line-height: 16px; height: 17px; white-space: nowrap; }
.nw-pct b { font-size: 16px; }
.nw-pct small { font-size: 8px; color: #d4d4d8; }
.nw-bar { width: 28px; height: 4px; background: #43454d; border-radius: 2px; }
.nw-bar i { display: block; width: 4px; height: 4px; background: #2cb8b0; border-radius: 2px; }
.nw-speed { display: flex; align-items: center; height: 28px; padding-left: 5px; }
.nw-arrow { width: 5px; height: 10px; flex: none; margin-top: 5px; }
.nw-val { flex: 1; text-align: center; display: flex; flex-direction: column; align-items: center; padding-right: 1px; }
.nw-val span { font-size: 10px; line-height: 12px; }
.nw-val small { font-size: 8px; line-height: 11px; color: #d8d8dc; }
```
FILE: scene.js
```js
// Draws the printer bed as a perspective 22 x 22 grid.
(function () {
  var p = [[302, 713], [629, 873], [1262, 771], [865, 641]];
  var dx1 = p[1][0] - p[2][0], dx2 = p[3][0] - p[2][0], sx = p[0][0] - p[1][0] + p[2][0] - p[3][0];
  var dy1 = p[1][1] - p[2][1], dy2 = p[3][1] - p[2][1], sy = p[0][1] - p[1][1] + p[2][1] - p[3][1];
  var den = dx1 * dy2 - dx2 * dy1;
  var g = (sx * dy2 - dx2 * sy) / den, h = (dx1 * sy - sx * dy1) / den;
  var a = p[1][0] - p[0][0] + g * p[1][0], b = p[3][0] - p[0][0] + h * p[3][0], c = p[0][0];
  var d = p[1][1] - p[0][1] + g * p[1][1], e = p[3][1] - p[0][1] + h * p[3][1], f = p[0][1];
  function map(u, v) {
    var w = g * u + h * v + 1;
    return ((a * u + b * v + c) / w).toFixed(1) + ' ' + ((d * u + e * v + f) / w).toFixed(1);
  }
  var n = 22, path = '';
  for (var i = 0; i <= n; i++) {
    path += 'M' + map(i / n, 0) + 'L' + map(i / n, 1);
    path += 'M' + map(0, i / n) + 'L' + map(1, i / n);
  }
  var NS = 'http://www.w3.org/2000/svg';
  var bed = document.getElementById('bed');
  var base = document.createElementNS(NS, 'path');
  base.setAttribute('d', 'M' + p[0].join(' ') + 'L' + p[1].join(' ') + 'L' + p[2].join(' ') + 'L' + p[3].join(' ') + 'Z');
  base.setAttribute('fill', '#3c3c3c');
  var lines = document.createElementNS(NS, 'path');
  lines.setAttribute('d', path);
  lines.setAttribute('fill', 'none');
  lines.setAttribute('stroke', '#bebebe');
  lines.setAttribute('stroke-width', '1.8');
  bed.appendChild(base);
  bed.appendChild(lines);
})();
```
